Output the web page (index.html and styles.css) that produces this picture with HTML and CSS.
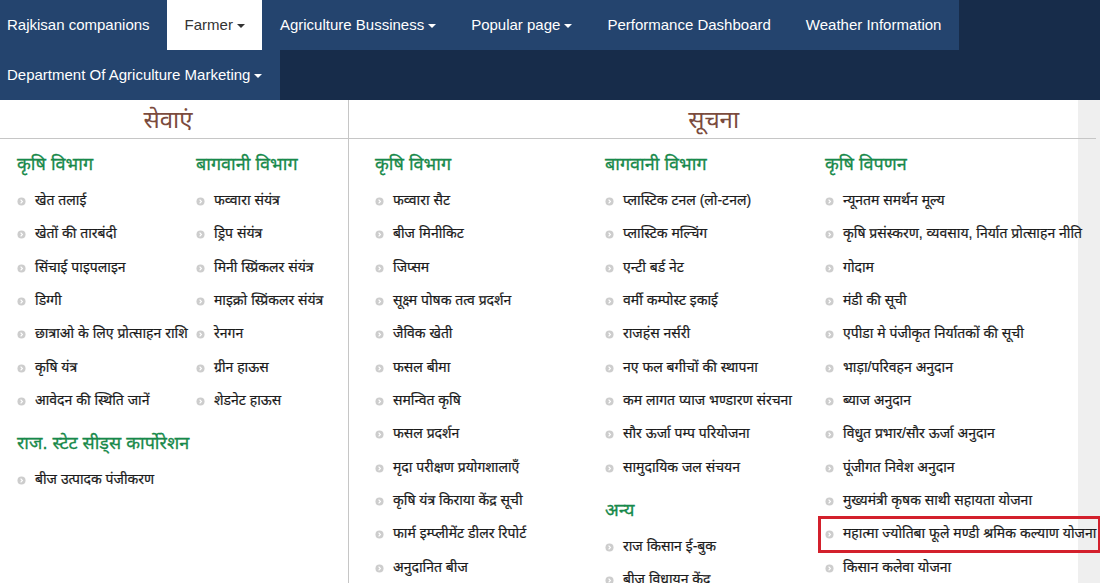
FILE: index.html
```html
<!DOCTYPE html>
<html lang="hi">
<head>
<meta charset="utf-8">
<title>Rajkisan - Farmer</title>
<link rel="stylesheet" href="styles.css">
</head>
<body>
<nav class="topnav">
  <ul class="menu">
    <li class="menu-item"><a href="#">Rajkisan companions</a></li>
    <li class="menu-item active"><a href="#">Farmer<span class="caret"></span></a></li>
    <li class="menu-item"><a href="#">Agriculture Bussiness<span class="caret"></span></a></li>
    <li class="menu-item"><a href="#">Popular page<span class="caret"></span></a></li>
    <li class="menu-item"><a href="#">Performance Dashboard</a></li>
    <li class="menu-item"><a href="#">Weather Information</a></li>
    <li class="menu-item"><a href="#">Department Of Agriculture Marketing<span class="caret"></span></a></li>
  </ul>
</nav>

<div class="mega">
  <section class="pane pane-seva">
    <h2 class="pane-title">सेवाएं</h2>
    <div class="pane-body seva-grid">
      <div class="group">
        <h3 class="group-title">कृषि विभाग</h3>
        <ul class="links">
          <li><svg class="bullet" viewBox="0 0 10 10"><circle cx="5" cy="5" r="4.5"/><path d="M4 3L6 5L4 7"/></svg>खेत तलाई</li>
          <li><svg class="bullet" viewBox="0 0 10 10"><circle cx="5" cy="5" r="4.5"/><path d="M4 3L6 5L4 7"/></svg>खेतों की तारबंदी</li>
          <li><svg class="bullet" viewBox="0 0 10 10"><circle cx="5" cy="5" r="4.5"/><path d="M4 3L6 5L4 7"/></svg>सिंचाई पाइपलाइन</li>
          <li><svg class="bullet" viewBox="0 0 10 10"><circle cx="5" cy="5" r="4.5"/><path d="M4 3L6 5L4 7"/></svg>डिग्गी</li>
          <li><svg class="bullet" viewBox="0 0 10 10"><circle cx="5" cy="5" r="4.5"/><path d="M4 3L6 5L4 7"/></svg>छात्राओ के लिए प्रोत्साहन राशि</li>
          <li><svg class="bullet" viewBox="0 0 10 10"><circle cx="5" cy="5" r="4.5"/><path d="M4 3L6 5L4 7"/></svg>कृषि यंत्र</li>
          <li><svg class="bullet" viewBox="0 0 10 10"><circle cx="5" cy="5" r="4.5"/><path d="M4 3L6 5L4 7"/></svg>आवेदन की स्थिति जानें</li>
        </ul>
      </div>
      <div class="group">
        <h3 class="group-title">बागवानी विभाग</h3>
        <ul class="links">
          <li><svg class="bullet" viewBox="0 0 10 10"><circle cx="5" cy="5" r="4.5"/><path d="M4 3L6 5L4 7"/></svg>फव्वारा संयंत्र</li>
          <li><svg class="bullet" viewBox="0 0 10 10"><circle cx="5" cy="5" r="4.5"/><path d="M4 3L6 5L4 7"/></svg>ड्रिप संयंत्र</li>
          <li><svg class="bullet" viewBox="0 0 10 10"><circle cx="5" cy="5" r="4.5"/><path d="M4 3L6 5L4 7"/></svg>मिनी स्प्रिंकलर संयंत्र</li>
          <li><svg class="bullet" viewBox="0 0 10 10"><circle cx="5" cy="5" r="4.5"/><path d="M4 3L6 5L4 7"/></svg>माइक्रो स्प्रिंकलर संयंत्र</li>
          <li><svg class="bullet" viewBox="0 0 10 10"><circle cx="5" cy="5" r="4.5"/><path d="M4 3L6 5L4 7"/></svg>रेनगन</li>
          <li><svg class="bullet" viewBox="0 0 10 10"><circle cx="5" cy="5" r="4.5"/><path d="M4 3L6 5L4 7"/></svg>ग्रीन हाऊस</li>
          <li><svg class="bullet" viewBox="0 0 10 10"><circle cx="5" cy="5" r="4.5"/><path d="M4 3L6 5L4 7"/></svg>शेडनेट हाऊस</li>
        </ul>
      </div>
      <div class="group group-wide">
        <h3 class="group-title">राज. स्टेट सीड्स कार्पोरेशन</h3>
        <ul class="links">
          <li><svg class="bullet" viewBox="0 0 10 10"><circle cx="5" cy="5" r="4.5"/><path d="M4 3L6 5L4 7"/></svg>बीज उत्पादक पंजीकरण</li>
        </ul>
      </div>
    </div>
  </section>

  <section class="pane pane-suchna">
    <h2 class="pane-title">सूचना</h2>
    <div class="pane-body suchna-grid">
      <div class="col">
        <div class="group">
          <h3 class="group-title">कृषि विभाग</h3>
          <ul class="links">
            <li><svg class="bullet" viewBox="0 0 10 10"><circle cx="5" cy="5" r="4.5"/><path d="M4 3L6 5L4 7"/></svg>फव्वारा सैट</li>
            <li><svg class="bullet" viewBox="0 0 10 10"><circle cx="5" cy="5" r="4.5"/><path d="M4 3L6 5L4 7"/></svg>बीज मिनीकिट</li>
            <li><svg class="bullet" viewBox="0 0 10 10"><circle cx="5" cy="5" r="4.5"/><path d="M4 3L6 5L4 7"/></svg>जिप्सम</li>
            <li><svg class="bullet" viewBox="0 0 10 10"><circle cx="5" cy="5" r="4.5"/><path d="M4 3L6 5L4 7"/></svg>सूक्ष्म पोषक तत्व प्रदर्शन</li>
            <li><svg class="bullet" viewBox="0 0 10 10"><circle cx="5" cy="5" r="4.5"/><path d="M4 3L6 5L4 7"/></svg>जैविक खेती</li>
            <li><svg class="bullet" viewBox="0 0 10 10"><circle cx="5" cy="5" r="4.5"/><path d="M4 3L6 5L4 7"/></svg>फसल बीमा</li>
            <li><svg class="bullet" viewBox="0 0 10 10"><circle cx="5" cy="5" r="4.5"/><path d="M4 3L6 5L4 7"/></svg>समन्वित कृषि</li>
            <li><svg class="bullet" viewBox="0 0 10 10"><circle cx="5" cy="5" r="4.5"/><path d="M4 3L6 5L4 7"/></svg>फसल प्रदर्शन</li>
            <li><svg class="bullet" viewBox="0 0 10 10"><circle cx="5" cy="5" r="4.5"/><path d="M4 3L6 5L4 7"/></svg>मृदा परीक्षण प्रयोगशालाएँ</li>
            <li><svg class="bullet" viewBox="0 0 10 10"><circle cx="5" cy="5" r="4.5"/><path d="M4 3L6 5L4 7"/></svg>कृषि यंत्र किराया केंद्र सूची</li>
            <li><svg class="bullet" viewBox="0 0 10 10"><circle cx="5" cy="5" r="4.5"/><path d="M4 3L6 5L4 7"/></svg>फार्म इम्प्लीमेंट डीलर रिपोर्ट</li>
            <li><svg class="bullet" viewBox="0 0 10 10"><circle cx="5" cy="5" r="4.5"/><path d="M4 3L6 5L4 7"/></svg>अनुदानित बीज</li>
          </ul>
        </div>
      </div>
      <div class="col">
        <div class="group">
          <h3 class="group-title">बागवानी विभाग</h3>
          <ul class="links">
            <li><svg class="bullet" viewBox="0 0 10 10"><circle cx="5" cy="5" r="4.5"/><path d="M4 3L6 5L4 7"/></svg>प्लास्टिक टनल (लो-टनल)</li>
            <li><svg class="bullet" viewBox="0 0 10 10"><circle cx="5" cy="5" r="4.5"/><path d="M4 3L6 5L4 7"/></svg>प्लास्टिक मल्चिंग</li>
            <li><svg class="bullet" viewBox="0 0 10 10"><circle cx="5" cy="5" r="4.5"/><path d="M4 3L6 5L4 7"/></svg>एन्टी बर्ड नेट</li>
            <li><svg class="bullet" viewBox="0 0 10 10"><circle cx="5" cy="5" r="4.5"/><path d="M4 3L6 5L4 7"/></svg>वर्मी कम्पोस्ट इकाई</li>
            <li><svg class="bullet" viewBox="0 0 10 10"><circle cx="5" cy="5" r="4.5"/><path d="M4 3L6 5L4 7"/></svg>राजहंस नर्सरी</li>
            <li><svg class="bullet" viewBox="0 0 10 10"><circle cx="5" cy="5" r="4.5"/><path d="M4 3L6 5L4 7"/></svg>नए फल बगीचों की स्थापना</li>
            <li><svg class="bullet" viewBox="0 0 10 10"><circle cx="5" cy="5" r="4.5"/><path d="M4 3L6 5L4 7"/></svg>कम लागत प्याज भण्डारण संरचना</li>
            <li><svg class="bullet" viewBox="0 0 10 10"><circle cx="5" cy="5" r="4.5"/><path d="M4 3L6 5L4 7"/></svg>सौर ऊर्जा पम्प परियोजना</li>
            <li><svg class="bullet" viewBox="0 0 10 10"><circle cx="5" cy="5" r="4.5"/><path d="M4 3L6 5L4 7"/></svg>सामुदायिक जल संचयन</li>
          </ul>
        </div>
        <div class="group">
          <h3 class="group-title">अन्य</h3>
          <ul class="links">
            <li><svg class="bullet" viewBox="0 0 10 10"><circle cx="5" cy="5" r="4.5"/><path d="M4 3L6 5L4 7"/></svg>राज किसान ई-बुक</li>
            <li><svg class="bullet" viewBox="0 0 10 10"><circle cx="5" cy="5" r="4.5"/><path d="M4 3L6 5L4 7"/></svg>बीज विधायन केंद्र</li>
          </ul>
        </div>
      </div>
      <div class="col">
        <div class="group">
          <h3 class="group-title">कृषि विपणन</h3>
          <ul class="links">
            <li><svg class="bullet" viewBox="0 0 10 10"><circle cx="5" cy="5" r="4.5"/><path d="M4 3L6 5L4 7"/></svg>न्यूनतम समर्थन मूल्य</li>
            <li><svg class="bullet" viewBox="0 0 10 10"><circle cx="5" cy="5" r="4.5"/><path d="M4 3L6 5L4 7"/></svg>कृषि प्रसंस्करण, व्यवसाय, निर्यात प्रोत्साहन नीति</li>
            <li><svg class="bullet" viewBox="0 0 10 10"><circle cx="5" cy="5" r="4.5"/><path d="M4 3L6 5L4 7"/></svg>गोदाम</li>
            <li><svg class="bullet" viewBox="0 0 10 10"><circle cx="5" cy="5" r="4.5"/><path d="M4 3L6 5L4 7"/></svg>मंडी की सूची</li>
            <li><svg class="bullet" viewBox="0 0 10 10"><circle cx="5" cy="5" r="4.5"/><path d="M4 3L6 5L4 7"/></svg>एपीडा मे पंजीकृत निर्यातकों की सूची</li>
            <li><svg class="bullet" viewBox="0 0 10 10"><circle cx="5" cy="5" r="4.5"/><path d="M4 3L6 5L4 7"/></svg>भाड़ा/परिवहन अनुदान</li>
            <li><svg class="bullet" viewBox="0 0 10 10"><circle cx="5" cy="5" r="4.5"/><path d="M4 3L6 5L4 7"/></svg>ब्याज अनुदान</li>
            <li><svg class="bullet" viewBox="0 0 10 10"><circle cx="5" cy="5" r="4.5"/><path d="M4 3L6 5L4 7"/></svg>विधुत प्रभार/सौर ऊर्जा अनुदान</li>
            <li><svg class="bullet" viewBox="0 0 10 10"><circle cx="5" cy="5" r="4.5"/><path d="M4 3L6 5L4 7"/></svg>पूंजीगत निवेश अनुदान</li>
            <li><svg class="bullet" viewBox="0 0 10 10"><circle cx="5" cy="5" r="4.5"/><path d="M4 3L6 5L4 7"/></svg>मुख्यमंत्री कृषक साथी सहायता योजना</li>
            <li class="is-highlighted"><svg class="bullet" viewBox="0 0 10 10"><circle cx="5" cy="5" r="4.5"/><path d="M4 3L6 5L4 7"/></svg>महात्मा ज्योतिबा फूले मण्डी श्रमिक कल्याण योजना</li>
            <li><svg class="bullet" viewBox="0 0 10 10"><circle cx="5" cy="5" r="4.5"/><path d="M4 3L6 5L4 7"/></svg>किसान कलेवा योजना</li>
          </ul>
        </div>
      </div>
    </div>
  </section>
</div>
</body>
</html>
```

FILE: styles.css
```css
* { box-sizing: border-box; }

body {
  margin: 0;
  background: #efefef;
  font-family: "Liberation Sans", Arial, "Noto Sans Devanagari", sans-serif;
}

.topnav {
  background: #172c4a;
  overflow: hidden;
}

.menu {
  list-style: none;
  margin: 0 0 0 -10.5px;
  padding: 0;
  display: flex;
  flex-wrap: wrap;
}

.menu-item a {
  display: block;
  padding: 15px 17.5px;
  line-height: 20px;
  font-size: 15px;
  color: #fff;
  background: #24446e;
  text-decoration: none;
  white-space: nowrap;
}

.menu-item.active a {
  background: #fff;
  color: #333;
}

.caret {
  display: inline-block;
  width: 0;
  height: 0;
  margin-left: 4px;
  vertical-align: middle;
  border-top: 4px solid;
  border-left: 4px solid transparent;
  border-right: 4px solid transparent;
}

.mega {
  display: flex;
  width: 1078px;
  min-height: 483px;
  background: #fff;
}

.pane-seva {
  width: 349px;
  flex: none;
  border-right: 1px solid #c6c6c6;
}

.pane-suchna {
  flex: 1;
}

.pane-title {
  margin: 0;
  height: 39px;
  border-bottom: 1px solid #c6c6c6;
  text-align: center;
  font-size: 24px;
  line-height: 40px;
  font-weight: normal;
  color: #7b4b3d;
}

.pane-seva .pane-title {
  padding-right: 12px;
}

.pane-suchna .pane-title {
  padding-right: 18px;
}

.seva-grid {
  display: grid;
  grid-template-columns: 179px 1fr;
  padding-left: 17px;
}

.group-wide {
  grid-column: 1 / -1;
}

.suchna-grid {
  display: grid;
  grid-template-columns: 230px 220px 1fr;
  padding-left: 26px;
}

.group-title {
  margin: 12px 0 8px;
  font-size: 18px;
  line-height: 26px;
  font-weight: normal;
  color: #17894a;
  white-space: nowrap;
  -webkit-text-stroke: 0.3px #17894a;
}

.links {
  list-style: none;
  margin: 0;
  padding: 0;
}

.links li {
  display: flex;
  align-items: center;
  height: 33.33px;
  font-size: 14px;
  color: #1c1c1c;
  white-space: nowrap;
  -webkit-text-stroke: 0.2px #1c1c1c;
}

.bullet {
  width: 9px;
  height: 9px;
  flex: none;
  margin-right: 9px;
}

.bullet circle {
  fill: #cdcdcd;
}

.bullet path {
  fill: none;
  stroke: #fff;
  stroke-width: 1.3;
}

.links li.is-highlighted {
  position: relative;
  width: max-content;
}

.links li.is-highlighted::after {
  content: "";
  position: absolute;
  top: -2px;
  bottom: -1px;
  left: -7px;
  right: -5px;
  border: 3px solid #d3202c;
  pointer-events: none;
}
```
